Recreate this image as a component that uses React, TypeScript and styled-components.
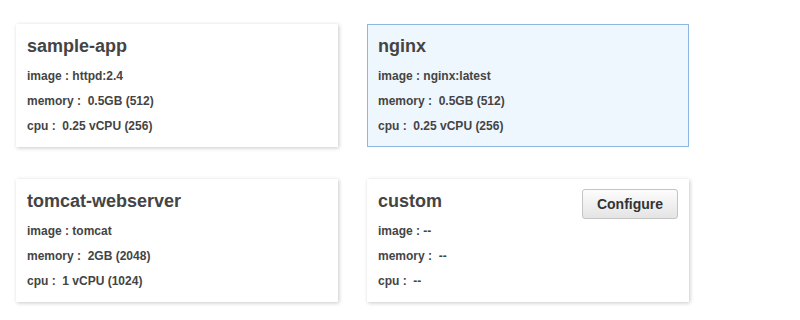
import React from "react";
import styled, { createGlobalStyle } from "styled-components";

const GlobalStyle = createGlobalStyle`
  body {
    margin: 0;
    background: #fff;
    font-family: "Liberation Sans", Arial, sans-serif;
  }
`;

const Grid = styled.div`
  display: grid;
  grid-template-columns: 322px 322px;
  column-gap: 29px;
  row-gap: 32px;
  padding: 24px 16px;
`;

const Card = styled.div<{ $selected?: boolean }>`
  box-sizing: border-box;
  height: 123px;
  padding: 10px 10px 7px;
  border: 1px solid ${(p) => (p.$selected ? "#8db6e0" : "#fff")};
  background: ${(p) => (p.$selected ? "#eff7fe" : "#fff")};
  box-shadow: ${(p) =>
    p.$selected ? "none" : "1px 1px 4px rgba(0, 0, 0, 0.22)"};
  color: #444;
`;

const Title = styled.h3`
  margin: 0 0 7px;
  font-size: 18px;
  line-height: 22px;
  font-weight: bold;
`;

const Row = styled.div`
  font-size: 12px;
  line-height: 25px;
  font-weight: bold;
  white-space: pre;
`;

const ConfigureButton = styled.button`
  float: right;
  margin-top: -1px;
  width: 96px;
  height: 30px;
  border: 1px solid #c4c4c4;
  border-radius: 3px;
  background: linear-gradient(#fdfdfd, #e4e4e4);
  color: #333;
  font-family: "Liberation Sans", Arial, sans-serif;
  font-size: 14px;
  font-weight: bold;
  cursor: pointer;
`;

type Task = {
  name: string;
  image: string;
  memory: string;
  cpu: string;
  selected?: boolean;
  custom?: boolean;
};

const tasks: Task[] = [
  { name: "sample-app", image: "httpd:2.4", memory: "0.5GB (512)", cpu: "0.25 vCPU (256)" },
  { name: "nginx", image: "nginx:latest", memory: "0.5GB (512)", cpu: "0.25 vCPU (256)", selected: true },
  { name: "tomcat-webserver", image: "tomcat", memory: "2GB (2048)", cpu: "1 vCPU (1024)" },
  { name: "custom", image: "--", memory: "--", cpu: "--", custom: true },
];

const App: React.FC = () => {
  return (
    <>
      <GlobalStyle />
      <Grid>
        {tasks.map((t) => (
          <Card key={t.name} $selected={t.selected}>
            {t.custom && <ConfigureButton>Configure</ConfigureButton>}
            <Title>{t.name}</Title>
            <Row>image : {t.image}</Row>
            <Row>memory :  {t.memory}</Row>
            <Row>cpu :  {t.cpu}</Row>
          </Card>
        ))}
      </Grid>
    </>
  );
};

export default App;
